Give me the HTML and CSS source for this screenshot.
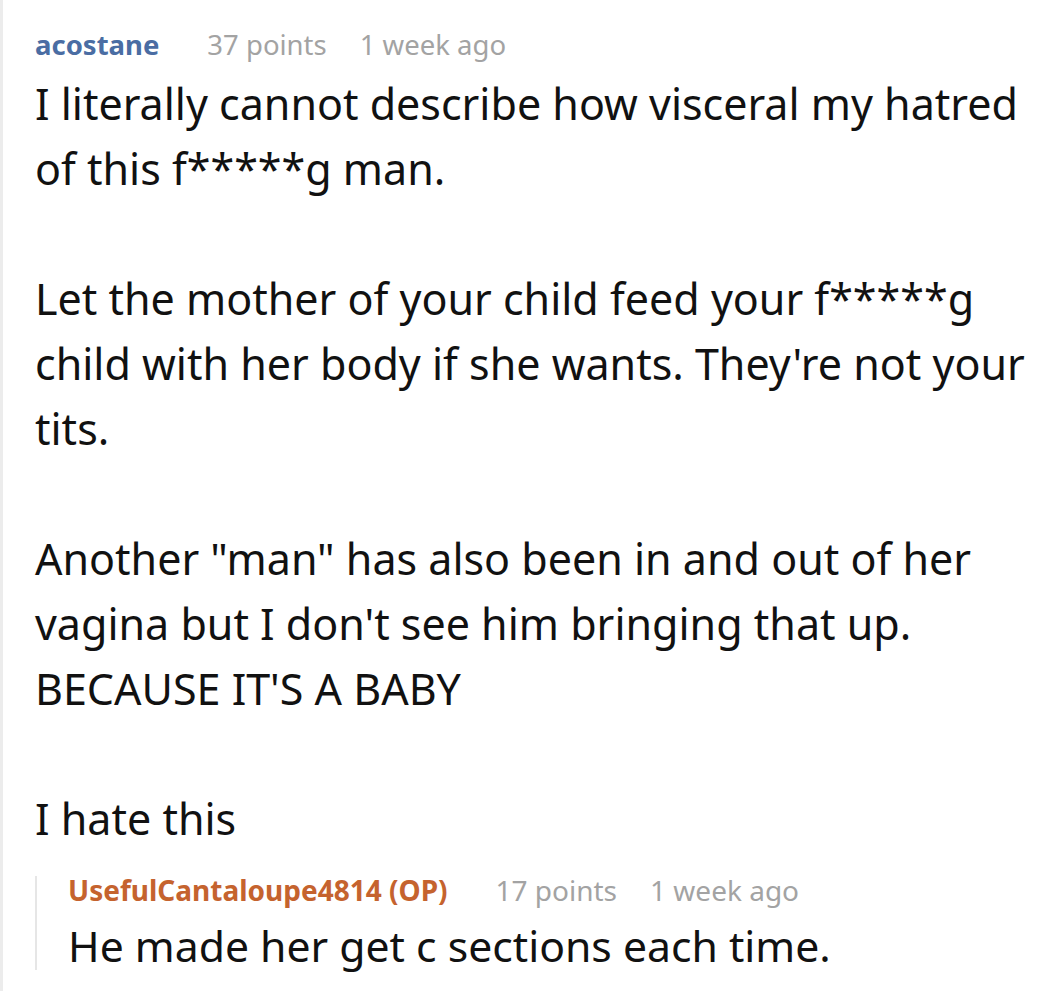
FILE: index.html
```html
<!DOCTYPE html>
<html>
<head>
<meta charset="utf-8">
<link rel="stylesheet" href="styles.css">
</head>
<body>
<div class="thread">
  <div class="comment">
    <div class="meta">
      <span class="author">acostane</span>
      <span class="info">37 points</span>
      <span class="info">1 week ago</span>
    </div>
    <div class="body">
      <p>I literally cannot describe how visceral my hatred of this f*****g man.</p>
      <p>Let the mother of your child feed your f*****g child with her body if she wants. They're not your tits.</p>
      <p>Another "man" has also been in and out of her vagina but I don't see him bringing that up.<br>BECAUSE IT'S A BABY</p>
      <p>I hate this</p>
    </div>
  </div>
  <div class="reply">
    <div class="meta">
      <span class="author op">UsefulCantaloupe4814 (OP)</span>
      <span class="info">17 points</span>
      <span class="info">1 week ago</span>
    </div>
    <div class="body reply-body">
      <p>He made her get c sections each time.</p>
    </div>
  </div>
</div>
</body>
</html>
```

FILE: styles.css
```css
html, body {
  margin: 0;
  padding: 0;
  background: #ffffff;
}

body {
  font-family: "Noto Sans", "Open Sans", sans-serif;
  color: #111111;
}

.thread {
  border-left: 3px solid #ececec;
  min-height: 991px;
  box-sizing: border-box;
  padding: 27px 0 0 32px;
}

.meta {
  display: flex;
  align-items: baseline;
  font-size: 27.5px;
  line-height: 36px;
}

.author {
  font-weight: 700;
  color: #4a6da3;
  margin-right: 48px;
}

.info {
  color: #a3a3a3;
  margin-right: 33px;
}

.body {
  font-size: 43px;
  line-height: 65px;
  width: 1000px;
  margin-top: 8px;
}

.body p {
  margin: 0 0 65px 0;
}

.body p:last-child {
  margin-bottom: 0;
}

.reply {
  margin-top: 25px;
  border-left: 2px solid #e6e6e6;
  padding-left: 31px;
}

.reply .meta {
  font-size: 28px;
  line-height: 28px;
}

.author.op {
  color: #c5632e;
}

.reply-body {
  margin-top: 18px;
  font-size: 42.7px;
  line-height: 48px;
}
```
